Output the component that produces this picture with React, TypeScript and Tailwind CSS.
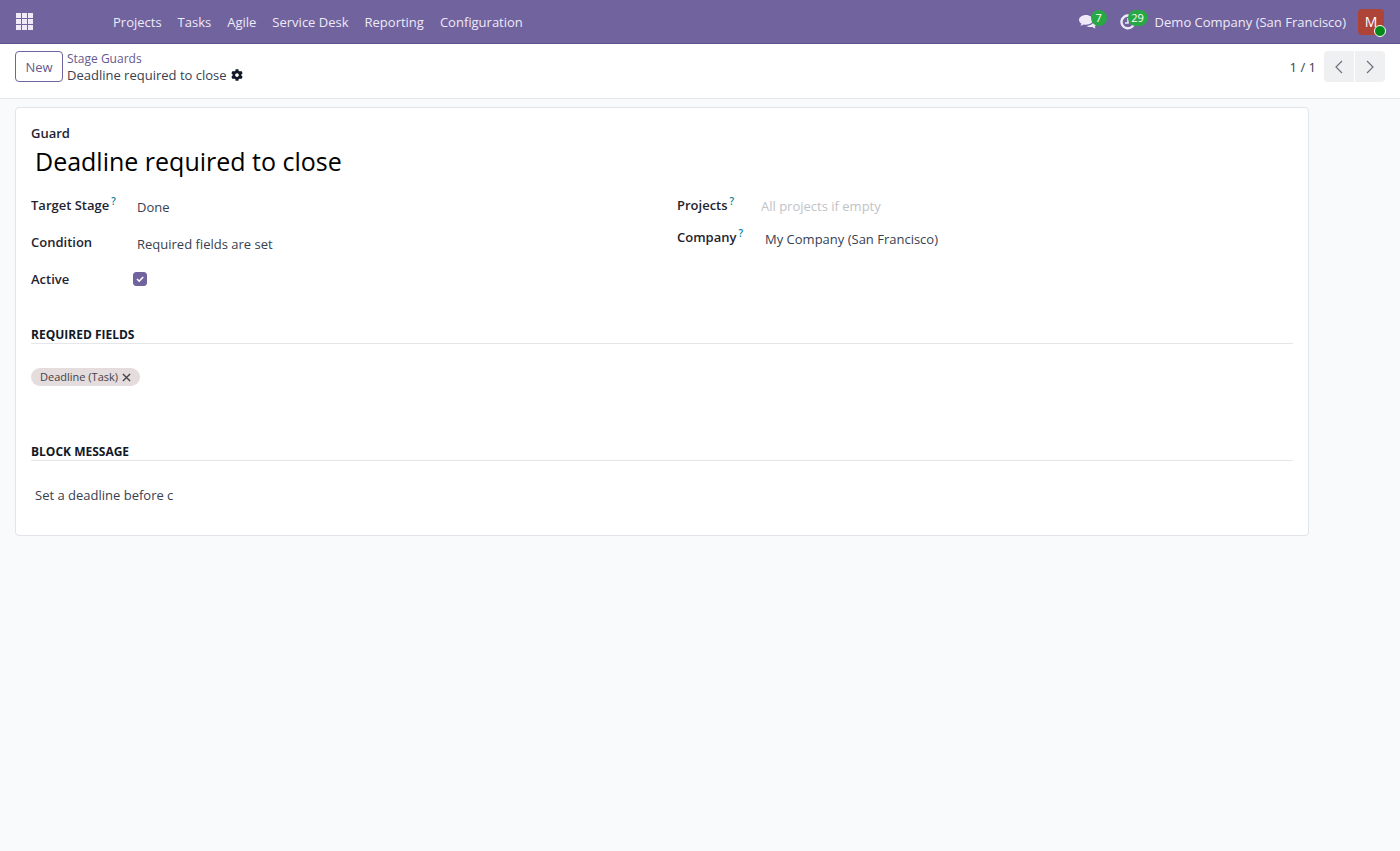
import { useState } from "react";
import { FaCog } from "react-icons/fa";

const menus = [
  "Projects",
  "Tasks",
  "Agile",
  "Service Desk",
  "Reporting",
  "Configuration",
];

function AppsIcon() {
  const cells = [0, 6, 12];
  return (
    <svg width="17" height="17" viewBox="0 0 17 17" fill="currentColor">
      {cells.map((y) =>
        cells.map((x) => (
          <rect key={`${x}-${y}`} x={x} y={y} width="5" height="5" />
        ))
      )}
    </svg>
  );
}

function MessagesIcon() {
  return (
    <svg width="18" height="16" viewBox="0 0 18 16" fill="currentColor">
      <path d="M7 1C3.1 1 0 3.3 0 6c0 1.500 1 2.900 2.500 3.800-.2.800-.6 1.400-1.200 2 1.400-.1 2.600-.6 3.500-1.300.7.200 1.400.200 2.200.2 3.900 0 7-2.100 7-4.700S10.900 1 7 1z" />
      <path d="M15.300 5.500c.1 3.500-3.400 6.200-7.800 6.400 1.200.8 2.700 1.200 4.200 1.200.6 0 1.100 0 1.600-.1 1 .8 2.200 1.300 3.500 1.300-.5-.5-.9-1.200-1.100-1.900 1.300-.8 2.100-1.900 2.100-3.200 0-1.500-1-2.900-2.500-3.700z" />
    </svg>
  );
}

function ActivityIcon() {
  return (
    <svg
      width="16"
      height="16"
      viewBox="0 0 16 16"
      fill="none"
      stroke="currentColor"
    >
      <path d="M9 1.600A6.400 6.400 0 1 0 14.200 9" strokeWidth="2.400" />
      <path d="M8 4v5H5" strokeWidth="1.600" />
    </svg>
  );
}

function Chevron({ d }: { d: string }) {
  return (
    <svg
      width="8"
      height="14"
      viewBox="0 0 8 14"
      fill="none"
      stroke="currentColor"
      strokeWidth="1.200"
    >
      <path d={d} />
    </svg>
  );
}

function Navbar() {
  return (
    <header className="flex h-11 items-center border-b border-[#5f5290] bg-[#71639e] px-4 text-[#eeeaf8]">
      <button type="button" aria-label="Apps" className="mr-[70px] py-px">
        <AppsIcon />
      </button>
      <nav className="flex flex-1 gap-4 pl-[10px]">
        {menus.map((menu) => (
          <a key={menu} href="#">
            {menu}
          </a>
        ))}
      </nav>
      <div className="flex items-center">
        <button type="button" aria-label="Messages" className="relative mr-[23px]">
          <MessagesIcon />
          <span className="absolute -top-1 left-3 flex h-4 w-4 items-center justify-center rounded-full bg-[#28a745] text-[11px] text-white">
            7
          </span>
        </button>
        <button type="button" aria-label="Activities" className="relative mr-[19px]">
          <ActivityIcon />
          <span className="absolute -top-1 left-2 flex h-4 w-5 items-center justify-center rounded-full bg-[#28a745] text-[11px] text-white">
            29
          </span>
        </button>
        <button type="button" className="mr-3">
          Demo Company (San Francisco)
        </button>
        <button
          type="button"
          aria-label="User menu"
          className="relative h-[26px] w-[26px] rounded bg-[#ad4437] text-sm text-white"
        >
          M
          <span className="absolute -bottom-0.5 -right-0.5 h-3 w-3 rounded-full border border-white bg-[#008818]" />
        </button>
      </div>
    </header>
  );
}

function ControlPanel() {
  return (
    <div className="flex h-[55px] items-start justify-between border-b border-[#e4e6ea] bg-white px-[15px] pt-[7px]">
      <div className="flex gap-1">
        <button
          type="button"
          className="h-[31px] w-12 rounded border border-[#71639e] font-medium text-[#66598f]"
        >
          New
        </button>
        <div className="flex flex-col leading-4">
          <a href="#" className="text-[12px] font-medium text-[#66598f]">
            Stage Guards
          </a>
          <div className="flex items-center gap-1">
            <span>Deadline required to close</span>
            <button type="button" aria-label="Actions" className="text-[#111827]">
              <FaCog size={12} />
            </button>
          </div>
        </div>
      </div>
      <div className="flex items-center">
        <span className="mr-2">1 / 1</span>
        <div className="flex gap-px text-[#6b7280]">
          <button
            type="button"
            aria-label="Previous"
            className="flex h-[31px] w-[30px] items-center justify-center rounded-l bg-[#eef0f1]"
          >
            <Chevron d="M7 1 1 7l6 6" />
          </button>
          <button
            type="button"
            aria-label="Next"
            className="flex h-[31px] w-[30px] items-center justify-center rounded-r bg-[#eef0f1]"
          >
            <Chevron d="m1 1 6 6-6 6" />
          </button>
        </div>
      </div>
    </div>
  );
}

function Label({ id, text, help }: { id: string; text: string; help?: boolean }) {
  return (
    <label htmlFor={id} className="flex gap-0.5 font-semibold text-[#1f2430]">
      {text}
      {help && <span className="-mt-1 text-[10px] text-[#01829b]">?</span>}
    </label>
  );
}

function Section({ title }: { title: string }) {
  return (
    <h2 className="border-b border-[#e4e6ea] text-[12px] font-bold uppercase leading-[17px] text-[#111827]">
      {title}
    </h2>
  );
}

export default function App() {
  const [form, setForm] = useState({
    name: "Deadline required to close",
    stage: "Done",
    condition: "fields",
    active: true,
    projects: "",
    company: "My Company (San Francisco)",
    message: "Set a deadline before c",
  });
  const [tags, setTags] = useState(["Deadline (Task)"]);

  const handleChange = (
    e: React.ChangeEvent<HTMLInputElement | HTMLSelectElement>
  ) => {
    setForm({ ...form, [e.target.name]: e.target.value });
  };

  return (
    <div className="min-h-screen bg-[#f8fafc] font-['Open_Sans','Noto_Sans',sans-serif] text-[13px] leading-5 text-[#374151]">
      <Navbar />
      <ControlPanel />
      <main className="pl-[15px] pr-[91px] pt-2">
        <form className="rounded border border-[#e1e4e8] bg-white px-[15px] pb-[30px] pt-[15px]">
          <Label id="name" text="Guard" />
          <input
            id="name"
            name="name"
            value={form.name}
            onChange={handleChange}
            className="block h-9 w-full px-1 text-[25px] text-black"
          />

          <div className="mt-4 grid grid-cols-2 gap-[30px]">
            <div className="grid grid-cols-[102px_1fr] content-start gap-y-[15px]">
              <Label id="stage" text="Target Stage" help />
              <input
                id="stage"
                name="stage"
                value={form.stage}
                onChange={handleChange}
                className="mt-0.5 h-5 w-full px-1"
              />
              <Label id="condition" text="Condition" />
              <select
                id="condition"
                name="condition"
                value={form.condition}
                onChange={handleChange}
                className="mt-0.5 h-5 w-full appearance-none px-1"
              >
                <option value="fields">Required fields are set</option>
              </select>
              <Label id="active" text="Active" />
              <div className="grid h-5 w-[14px] items-center">
                <input
                  id="active"
                  type="checkbox"
                  checked={form.active}
                  onChange={(e) =>
                    setForm({ ...form, active: e.target.checked })
                  }
                  className="peer col-start-1 row-start-1 h-[14px] w-[14px] appearance-none rounded-[3px] border border-[#71639e] checked:bg-[#71639e]"
                />
                <svg
                  viewBox="0 0 14 14"
                  className="pointer-events-none invisible col-start-1 row-start-1 h-[14px] w-[14px] peer-checked:visible"
                  fill="none"
                  stroke="white"
                  strokeWidth="1.600"
                >
                  <path d="m4 7 2.200 2.200L10.200 5" />
                </svg>
              </div>
            </div>

            <div className="grid grid-cols-[84px_1fr] content-start gap-y-2.5">
              <Label id="projects" text="Projects" help />
              <input
                id="projects"
                name="projects"
                placeholder="All projects if empty"
                value={form.projects}
                onChange={handleChange}
                className="h-[22px] w-full placeholder:text-[#c0c3c8]"
              />
              <Label id="company" text="Company" help />
              <input
                id="company"
                name="company"
                value={form.company}
                onChange={handleChange}
                className="mt-0.5 h-5 w-full px-1"
              />
            </div>
          </div>

          <div className="mt-[37px]">
            <Section title="Required Fields" />
            <div className="flex h-[99px] items-start pt-6">
              {tags.map((tag) => (
                <span
                  key={tag}
                  className="flex h-[18px] items-center gap-1 rounded-full bg-[#e4dcdd] px-[9px] text-[11px] font-medium text-[#454248]"
                >
                  {tag}
                  <button
                    type="button"
                    aria-label={`Remove ${tag}`}
                    onClick={() => setTags(tags.filter((t) => t !== tag))}
                  >
                    <svg
                      width="9"
                      height="9"
                      viewBox="0 0 10 10"
                      stroke="currentColor"
                      strokeWidth="1.500"
                    >
                      <path d="m1 1 8 8M9 1 1 9" />
                    </svg>
                  </button>
                </span>
              ))}
            </div>
          </div>

          <Section title="Block Message" />
          <input
            name="message"
            aria-label="Block Message"
            value={form.message}
            onChange={handleChange}
            className="mt-6 block h-5 w-full px-1"
          />
        </form>
      </main>
    </div>
  );
}
